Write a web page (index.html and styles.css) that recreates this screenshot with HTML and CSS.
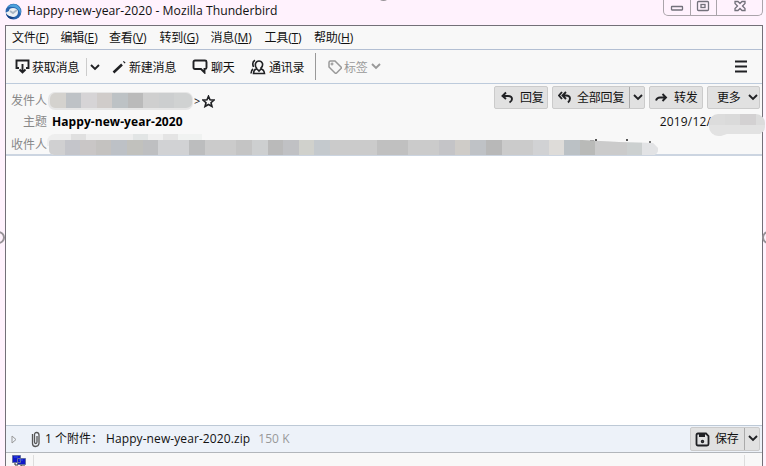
FILE: index.html
```
<!DOCTYPE html>
<html lang="zh-CN">
<head>
<meta charset="utf-8">
<title>Happy-new-year-2020 - Mozilla Thunderbird</title>
<link rel="stylesheet" href="styles.css">
</head>
<body>
<header class="titlebar">
  <svg class="logo" width="17" height="17" viewBox="0 0 17 17"><circle cx="8.500" cy="8.600" r="7.900" fill="#2864ad"/><path d="M2 5Q5 0 11 1.500Q17 5 15.500 11Q13 4 8 4Q4 3 2 5" fill="#4da2dc"/><path d="M1 9.500L4 8Q4 5 8 5Q12.500 5 13 8.500Q13 13 9 14Q3 14 1 10Z" fill="#edf0f3"/><path d="M5 8l3 2 4-3" fill="none" stroke="#a9b7c5"/><path d="M1 11q4 4 9 3l-3 2q-4 0-6-5" fill="#173f82"/></svg>
  <span class="title">Happy-new-year-2020 - Mozilla Thunderbird</span>
  <div class="controls">
    <span><svg width="14" height="12" viewBox="0 0 14 12"><rect x="1.500" y="6.500" width="11" height="3.500" rx=".5"/></svg></span>
    <span><svg width="14" height="12" viewBox="0 0 14 12"><rect x="1.500" y="1.500" width="11" height="9" rx="1"/><rect x="5" y="4.500" width="4" height="3"/></svg></span>
    <span><svg width="14" height="12" viewBox="0 0 14 12"><path d="M2 1.500h3l2 2 2-2h3v2L9.500 6l2.500 2.500v2H9l-2-2-2 2H2v-2L4.500 6 2 3.500z"/></svg></span>
  </div>
  <i class="handle top"></i>
</header>
<i class="handle left"></i><i class="handle right"></i>
<main class="window">
  <nav class="menu"><span>文件(<u>F</u>)</span><span>编辑(<u>E</u>)</span><span>查看(<u>V</u>)</span><span>转到(<u>G</u>)</span><span>消息(<u>M</u>)</span><span>工具(<u>T</u>)</span><span>帮助(<u>H</u>)</span></nav>
  <div class="toolbar">
    <div class="tool get"><svg width="15" height="15" viewBox="0 0 15 15"><path d="M4 9H1.500V1.500h12V9H11M7.500 5v8M4.500 10.500l3 3 3-3"/></svg><span>获取消息</span></div>
    <div class="drop"><svg width="10" height="7" viewBox="0 0 10 7"><path d="M1 1l4 4 4-4"/></svg></div>
    <div class="tool write"><svg width="14" height="14" viewBox="0 0 14 14"><path d="M1.500 12.500l8.500-8M11.800 2.700l.9-.9" stroke-width="2.500"/></svg><span>新建消息</span></div>
    <div class="tool chat"><svg width="16" height="15" viewBox="0 0 16 15"><path d="M3 1.500h10q1.500 0 1.500 1.500v5.500q0 1.500-1.500 1.500h-.5v3.500L9 10H3Q1.500 10 1.500 8.500V3q0-1.500 1.500-1.500z"/></svg><span>聊天</span></div>
    <div class="tool book"><svg width="16" height="16" viewBox="0 0 16 16"><path d="M6.500 9Q5 7.500 5.500 4.500Q6.500 2 9 2q2.500 0 3.500 2.500.5 3-1.500 4.500v1q3 .5 3.500 4.500H3.500q.2-4 3-4.500zM3.500 8Q1.500 3 5 1.200M1 14.500q0-3 2-4.500M7 10l2 2 2-2" stroke-width="1.600"/></svg><span>通讯录</span></div>
    <div class="tool tag"><svg width="14" height="14" viewBox="0 0 14 14"><path d="M1 2.500Q1 1 2.500 1H7l6 6q.7.8 0 1.600L8.600 13q-.8.700-1.600 0L1 7z" stroke-width="1.500"/><circle cx="4" cy="4" r=".5"/></svg><span>标签</span><svg class="chev" width="10" height="7" viewBox="0 0 10 7"><path d="M1 1l4 4 4-4"/></svg></div>
    <svg class="burger" width="12" height="13" viewBox="0 0 12 13"><path d="M0 1.500h12M0 6.500h12M0 11.500h12"/></svg>
  </div>
  <section class="message">
    <div class="from"><span class="label">发件人</span><div class="mosaic sender"><i></i><i></i><i></i><i></i><i></i><i></i><i></i><i></i><i></i><i></i></div><span class="gt">&gt;</span><svg width="13" height="13" viewBox="0 0 13 13"><path d="M6.500 1.200L8 4.800l4 .3-3 2.600 1 3.800-3.500-2-3.500 2 1-3.800L1 5.100l4-.3z" stroke-width="1.600"/></svg>
      <div class="actions">
        <button class="reply"><svg width="13" height="13" viewBox="0 0 13 13"><path d="M5 1.500L1.500 5 5 8M2 5h5q4 0 4 3 0 2-2.500 3.500"/></svg><span>回复</span></button>
        <button class="all"><svg width="14" height="13" viewBox="0 0 14 13"><path d="M4 1L1 4.500 4 8M8 1L4.500 4.500 8 8M5 4.500h3q4 0 4 3 0 2-2 4"/></svg><span>全部回复</span><b><svg width="10" height="7" viewBox="0 0 10 7"><path d="M1 1l4 4 4-4"/></svg></b></button>
        <button class="forward"><svg width="13" height="11" viewBox="0 0 13 11"><path d="M1 8.500Q2 5.500 5 5.500h6M7.500 2L11 5.500 7.500 9"/></svg><span>转发</span></button>
        <button class="more"><span>更多</span><svg width="10" height="7" viewBox="0 0 10 7"><path d="M1 1l4 4 4-4"/></svg></button>
      </div>
    </div>
    <div class="subject"><span class="label">主题</span><strong>Happy-new-year-2020</strong><time>2019/12/</time><div class="datemask"><i></i><i></i><i></i><i></i><i></i><i></i><i></i><i></i></div></div>
    <div class="to"><span class="label">收件人</span><div class="veil"></div><div class="mosaic recipients"><i></i><i></i><i></i><i></i><i></i><i></i><i></i><i></i><i></i><i></i><i></i><i></i><i></i><i></i><i></i><i></i><i></i><i></i><i></i><i></i><i></i><i></i><i></i><i></i><i></i><i></i><i></i><i></i><i></i><i></i><i></i><i></i><i></i><i></i><i></i><i></i><i></i><i></i><i></i></div><div class="specks"></div></div>
  </section>
  <section class="content"></section>
  <div class="attachments">
    <svg class="tri" width="6" height="9" viewBox="0 0 6 9"><path d="M1 1v7l4-3.500z"/></svg>
    <svg class="clip" width="10" height="17" viewBox="0 0 10 17"><path d="M1.500 4v8.500q0 3 3 3t3.500-3V4q0-2.500-2.300-2.500T3.500 4v7q0 1.500 1.200 1.500T6 11V5M1.500 5V3"/></svg>
    <span class="count">1 个附件：</span><span class="file">Happy-new-year-2020.zip</span><span class="size">150 K</span>
    <button class="save"><svg width="15" height="15" viewBox="0 0 15 15"><path d="M3 1.500h8l2.500 2.500v8q0 1.500-1.500 1.500H3q-1.500 0-1.500-1.500V3Q1.500 1.500 3 1.500z" stroke-width="1.800"/><path d="M4 3.500h6" stroke-width="3"/><circle cx="7.500" cy="9.500" r="1" stroke-width="1.500"/></svg><span>保存</span><b><svg width="10" height="7" viewBox="0 0 10 7"><path d="M1 1l4 4 4-4"/></svg></b></button>
  </div>
  <footer><div class="network"><svg width="15" height="12" viewBox="0 0 15 12"><path d="M.5.500h8v7h-8zM5.500 3.500h8v6h-8z" fill="#1018c8" stroke="#626da0"/><path d="M2 2h4M7 5h4" stroke="#3550ef"/><path d="M3 8v2h3M9 10v1h4" stroke="#333" fill="none"/></svg></div><div class="grip"></div></footer>
</main>
</body>
</html>
```
FILE: styles.css
```
* { box-sizing: border-box; }
body { margin: 0; width: 766px; height: 466px; overflow: hidden; position: relative; background: #fff2fd; color: #111; font: 12px/18px "Open Sans", "Noto Sans CJK SC", sans-serif; }
svg { display: block; flex: none; fill: none; stroke: #202124; stroke-width: 1.9; }
span, strong, time { white-space: nowrap; }
.titlebar { display: flex; height: 25px; padding: 3px 3px 0 5px; position: relative; }
.logo { stroke: none; }
.title { margin-left: 5px; margin-top: -1px; font-size: 12.2px; letter-spacing: .02px; }
.controls { display: flex; width: 100px; height: 16px; margin: -3px 0 0 auto; border: 1px solid #aaa4aa; border-top: 0; border-radius: 0 0 5px 5px; }
.controls span { width: 26.5px; border-right: 1px solid #aaa4aa; display: flex; justify-content: center; }
.controls span:last-child { width: 45px; border: 0; }
.controls svg { stroke: #73717b; stroke-width: 1.3; }
.handle { position: absolute; width: 13px; height: 13px; border: 2px solid #979297; border-radius: 50%; }
.top { left: 377px; top: -12px; }
.left { left: -8px; top: 231px; }
.right { left: 762px; top: 231px; }
.window { width: 758px; margin-left: 5px; border: 1px solid #737078; border-bottom: 0; background: #f8f8f8; }
.menu { height: 24px; display: grid; grid-template-columns: 48.5px 48.5px 50.5px 51px 54px 49.5px 50px; padding: 3px 0 0 6px; border-bottom: 1px solid #b3bfd3; letter-spacing: -.15px; }
.menu u { text-underline-offset: 1px; }
.toolbar { height: 34px; display: flex; align-items: center; border-bottom: 1px solid #bdcbdc; padding-left: 9px; }
.tool { display: flex; align-items: center; gap: 3px; letter-spacing: -.2px; }
.tool span { position: relative; top: 1px; }
.get { width: 71px; }
.get span { margin-left: -1px; }
.drop { width: 26px; height: 18px; border-left: 1px solid #ccc; padding: 6px 0 0 3px; }
.write { width: 80px; }
.chat { width: 58px; }
.book { width: 65px; }
.tag { height: 27px; border-left: 1px solid #999; padding-left: 12px; color: #999; }
.tag span { margin-left: -1px; }
.tag svg { stroke: #999; }
.burger { margin: 0 15px 0 auto; }
.message { height: 72px; border-bottom: 2px solid #ccd5e1; }
.label { width: 41px; text-align: right; color: #888; flex: none; }
.from { display: flex; height: 28px; align-items: center; padding-top: 4px; }
.from > .label { margin-top: 1px; }
.from > svg { margin-left: 2px; margin-top: 2px; }
.gt { margin: 1px 0 0 1px; font-size: 11px; }
.mosaic, .datemask { display: flex; overflow: hidden; }
.sender { width: 145px; height: 18px; margin: 1px 0 0 1px; border-radius: 7px; background: #e6e6e6; border: solid #e6e6e6; border-width: 1px 1px 2px 2px; }
.sender i { flex: 0 0 15.5px; background: #cfcfcf; }
.sender i:nth-child(1) { background: #d4d2ce; }
.sender i:nth-child(2) { background: #bec2c6; }
.sender i:nth-child(3) { background: #d6d4d6; }
.sender i:nth-child(4) { background: #d0ccca; }
.sender i:nth-child(5) { background: #bdc2c5; }
.sender i:nth-child(6) { background: #bababa; }
.sender i:nth-child(8) { background: #cccecf; }
.sender i:nth-child(n+9) { background: #d0d2d2; }
.actions { display: flex; gap: 4px; margin: -5px 2px 0 auto; }
button { display: flex; align-items: center; padding: 0; font: inherit; letter-spacing: -.2px; color: #111; border: 1px solid #cbcbcb; border-radius: 2px; background: #e1e1e1; height: 23px; }
.reply { width: 54px; padding-left: 6px; gap: 6px; }
.all { width: 93px; padding-left: 5px; gap: 5px; }
.forward { width: 54px; padding-left: 5px; gap: 6px; }
.more { width: 53px; padding-left: 9px; gap: 7px; }
button b { height: 21px; width: 16px; border-left: 1px solid #aaa; padding: 7px 0 0 3px; margin-left: auto; flex: none; }
.subject { display: flex; height: 19px; align-items: center; }
.subject strong { margin-left: 5px; font-size: 12px; letter-spacing: .07px; color: #000; }
.subject time { margin-left: auto; letter-spacing: .15px; }
.datemask { width: 56px; height: 22px; margin: 5px -3px -2px -2px; border-radius: 9px; flex-wrap: wrap; align-content: flex-start; position: relative; clip-path: polygon(5px 0, 51px 0, 56px 5px, 56px 16px, 51px 20px, 18px 20px, 12px 22px, 6px 22px, 0 17px, 0 5px); }
.datemask i { width: 15.5px; height: 11px; background: #dcdcdc; }
.datemask i:nth-child(2) { background: #dadada; }
.datemask i:nth-child(3) { background: #d3d1d2; }
.datemask i:nth-child(4n) { width: 9px; }
.datemask i:nth-child(n+5) { background: #e2e2e2; }
.to { display: flex; height: 23px; padding-top: 5px; position: relative; }
.recipients { height: 15px; width: 609px; margin: 4px 0 0 2px; border-radius: 2px 0 5px 5px; position: relative; background: #eee; clip-path: polygon(0 0, 533px 0, 570px 2px, 604px 3px, 609px 8px, 609px 15px, 0 15px); }
.recipients i { flex: 0 0 15.62px; background: #cbcbcb; }
.recipients i:nth-child(1) { background: #d0d0d1; }
.recipients i:nth-child(2) { background: #c4c5ca; }
.recipients i:nth-child(3) { background: #c9c6c6; }
.recipients i:nth-child(4) { background: #c4c2c0; }
.recipients i:nth-child(5) { background: #bdc1c6; }
.recipients i:nth-child(6) { background: #c1c1bd; }
.recipients i:nth-child(7) { background: #bebfc1; }
.recipients i:nth-child(8), .recipients i:nth-child(9), .recipients i:nth-child(32) { background: #d1d2d4; }
.recipients i:nth-child(10) { background: #bcbdbe; }
.recipients i:nth-child(13) { background: #c4c4c4; }
.recipients i:nth-child(14) { background: #cdcfd0; }
.recipients i:nth-child(15) { background: #bababa; }
.recipients i:nth-child(16) { background: #c0c1c4; }
.recipients i:nth-child(17) { background: #d0d1cc; }
.recipients i:nth-child(18) { background: #c4c9cd; }
.recipients i:nth-child(22), .recipients i:nth-child(23) { background: #c0c0c0; }
.recipients i:nth-child(26) { background: #c4c4c7; }
.recipients i:nth-child(27) { background: #cfccc8; }
.recipients i:nth-child(28) { background: #bfc2c6; }
.recipients i:nth-child(29) { background: #b8b8b8; }
.recipients i:nth-child(33) { background: #dedcd9; }
.recipients i:nth-child(34) { background: #bbc1c5; }
.recipients i:nth-child(35) { background: #b9bab8; }
.recipients i:nth-child(38) { background: #ccd0d0; }
.recipients i:nth-child(39) { background: #e2e3e5; }
.veil { position: absolute; left: 41px; top: 3px; width: 155px; height: 12px; border-radius: 8px 0 0 0; background: linear-gradient(90deg, #eee 24px, #e0e0e0 24px 39px, #eee 39px 86px, #e2e5e5 86px 101px, #f0f0f0 101px 116px, #e4e4e4 116px 131px, #f0f2f1 131px); }
.specks { position: absolute; left: 578px; top: 8px; width: 66px; height: 4px; background: radial-gradient(circle, #555 1px, transparent 1.5px) 9px -1px / 4px 4px no-repeat, linear-gradient(#aaa, #aaa) 5px 1px / 4px 1px no-repeat, linear-gradient(#555, #555) 41px 0 / 2px 2px no-repeat, linear-gradient(#777, #777) 64px 2px / 2px 2px no-repeat; margin-left: 1px; }
.content { height: 269px; background: #fff; }
.attachments { display: flex; align-items: center; height: 28px; border-top: 1px solid #bdc9d6; border-bottom: 1px solid #b2b6bb; background: #edf2f9; padding-left: 5px; }
.tri { stroke: #999; stroke-width: 1; }
.clip { margin-left: 14px; stroke: #555; stroke-width: 1.3; }
.count { margin-left: 4px; width: 61px; }
.file { letter-spacing: .09px; }
.size { color: #999; margin-left: 8px; letter-spacing: .1px; }
.save { width: 70px; height: 24px; padding-left: 4px; margin: 0 2px 0 auto; gap: 5px; }
.save b { height: 22px; margin-left: auto; }
footer { height: 14px; display: flex; padding: 2px 17px 0 6px; }
.network { width: 22px; height: 12px; border-right: 1px solid #ddd; }
.network svg { stroke-width: 1; }
.grip { width: 1px; margin-left: auto; background: #ddd; }
```
